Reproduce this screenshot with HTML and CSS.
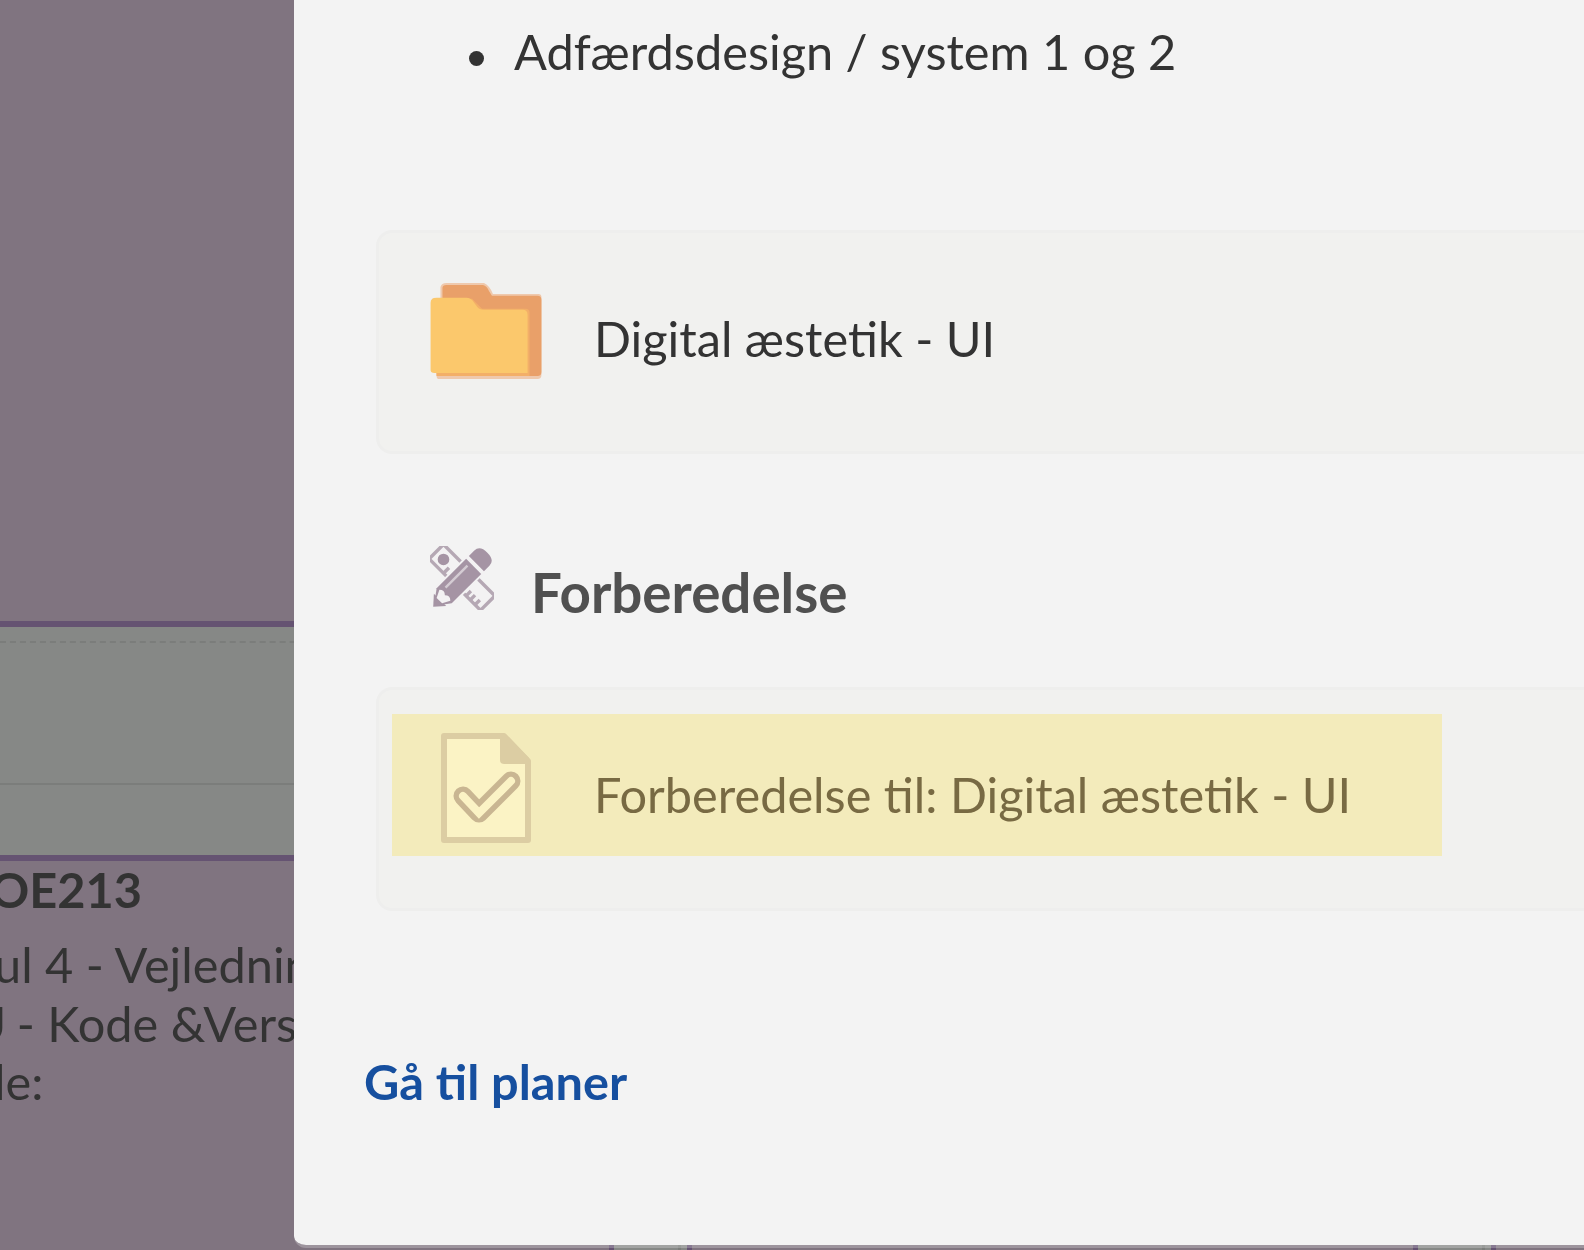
FILE: index.html
```html
<!DOCTYPE html>
<html lang="da">
<head>
<meta charset="utf-8">
<title>Planer</title>
<link rel="stylesheet" href="styles.css">
</head>
<body>
<div class="schedule">
  <div class="lesson lesson-top"></div>
  <div class="break"><div class="break-head"></div><div class="break-body"></div></div>
  <div class="lesson lesson-main">
    <div class="code">OE213</div>
    <div class="line module">ul 4 - Vejledning</div>
    <div class="line subject"><span class="cut">U</span> - Kode &amp;Versionering</div>
    <div class="line room">le:</div>
  </div>
  <div class="columns"><i class="gap"></i><i class="gap"></i></div>
</div>
<main class="modal">
  <ul class="topics"><li><span>Adfærdsdesign / system 1 og 2</span></li></ul>
  <section class="card">
    <svg class="folder" width="112" height="96" viewBox="0 0 112 97">
      <path fill="#efc9ad" d="M10 4Q11 0 16 0H54Q60 3 63 11H109Q112 11 112 14V93Q112 97 108 97H8Q6 97 6 93L10 16Z"/>
      <path fill="#e9a069" d="M12 5Q12 2 16 2H53Q57 3 59 8L62 13H108Q112 13 112 17V90Q112 94 108 94H8L12 15Z"/>
      <path fill="#f3af68" d="M2 16H42L52 26H96Q100 26 100 30V94H6Z"/>
      <path fill="#fbc86c" d="M0 20Q0 15 6 15H36Q41 15 44 20L47 24Q49 27 54 27H93Q98 27 98 32V91H4Q0 91 0 88Z"/>
    </svg>
    <span class="t-folder">Digital æstetik - UI</span>
  </section>
  <header class="heading">
    <svg class="tools" width="64" height="64" viewBox="0 0 66 66">
      <g transform="rotate(45 33 33)">
        <rect x="-5" y="22" width="75" height="21" rx="2" fill="#f3f2f3" stroke="#b5a8b4" stroke-width="3.5"/>
        <circle cx="6" cy="33" r="6" fill="#a594a4"/>
        <path d="M16 43v-8M55 43v-7M62 43v-7M49 43v-7" stroke="#b5a8b4" stroke-width="3.5"/>
      </g>
      <g transform="rotate(-45 33 33)">
        <rect x="7" y="20" width="53" height="26" fill="#f3f2f3"/>
        <path fill="#a594a4" d="M-8 33L7 22H50V44H7Z"/>
        <path fill="#a594a4" d="M-9 33L1 24V42Z"/>
        <path fill="#a594a4" d="M54 22H62Q70 22 70 33T62 44H54Z"/>
        <path fill="#f3f2f3" d="M0 29L8 25Q12 29 8 33Q12 37 8 41L0 37Z"/>
        <path d="M14 28H46" stroke="#d4ccd3" stroke-width="2.5"/>
      </g>
    </svg>
    <h2>Forberedelse</h2>
  </header>
  <section class="card">
    <div class="highlight">
      <svg class="doc" width="92" height="112" viewBox="0 0 92 112">
        <path fill="#fbf3c5" stroke="#dccda3" stroke-width="6" stroke-linejoin="round" d="M4 4H64L88 29V108H4Z"/>
        <path fill="#dccda3" d="M60 3H66L89 26V32H64Q60 32 60 28Z"/>
        <path fill="none" stroke="#c9b692" stroke-width="19" stroke-linecap="round" stroke-linejoin="round" d="M23 64L39 81L71 49"/>
        <path fill="none" stroke="#fbf3c5" stroke-width="8" stroke-linecap="round" d="M23 64L39 81L71 49"/>
      </svg>
      <span class="t-task">Forberedelse til: Digital æstetik - UI</span>
    </div>
  </section>
  <a class="plans">Gå til planer</a>
</main>
</body>
</html>
```
FILE: styles.css
```css
* { box-sizing: border-box; }
body { margin: 0; width: 1584px; height: 1250px; overflow: hidden; position: relative; font: 48.7px/60px Lato, sans-serif; color: #333; background: #807480; }
span { white-space: nowrap; }
.schedule { display: flex; flex-direction: column; height: 1250px; }
.lesson { background: #807480; }
.lesson-top { height: 621px; }
.break { height: 240px; border-top: 6px solid #655372; border-bottom: 6px solid #655372; background: #868886; }
.break-head { height: 16px; border-bottom: 2px dashed #7b7d7b; }
.break-body { height: 142px; border-bottom: 2px solid #7b7d7b; }
.lesson-main { height: 384px; overflow: hidden; white-space: nowrap; }
.code { font-weight: 700; height: 74px; margin-left: -10px; line-height: 56px; }
.line { line-height: 58.6px; }
.module { margin-left: -6px; }
.subject { margin-left: -29.5px; }
.cut { margin-right: -2px; }
.room { margin-left: -6px; }
.columns { height: 5px; display: flex; padding-left: 609px; gap: 721px; }
.gap { width: 83px; border: solid #655372; border-width: 0 5px; background: linear-gradient(90deg, #868886 64px, #7b7d7b 64px 67px, #868886 67px); }
.modal { position: absolute; left: 294px; top: 0; width: 1290px; height: 1248px; background: #f3f3f3; background-clip: padding-box; border-bottom: 3px solid rgba(255,255,255,.23); border-bottom-left-radius: 12px; padding-left: 82px; overflow: hidden; }
.topics { list-style: none; margin: 0; padding: 21px 0 0 93px; height: 230px; }
.topics li { display: flex; align-items: center; gap: 30px; }
.topics li::before { content: ""; width: 15px; height: 15px; border-radius: 50%; background: #333; margin-top: 14px; }
.card { width: 1240px; height: 224px; border: 3px solid #eeeeed; border-radius: 16px; background: #f1f1ef; }
.card:first-of-type { display: flex; padding: 50px 0 0 51px; gap: 52px; }
.t-folder { margin-top: 25px; }
.heading { display: flex; height: 233px; padding: 92px 0 0 54px; gap: 37px; }
h2 { margin: 16px 0 0; font-size: 54.7px; line-height: 60px; color: #505050; font-weight: 700; }
.highlight { display: flex; width: 1050px; height: 142px; margin: 24px 0 0 13px; padding: 18px 0 0 48px; background: #f3ebbb; color: #786a43; gap: 62px; }
.t-task { margin-top: 32px; }
.plans { display: block; width: 500px; margin: 140px 0 0 -12px; color: #164f9f; font-weight: 700; }
```
